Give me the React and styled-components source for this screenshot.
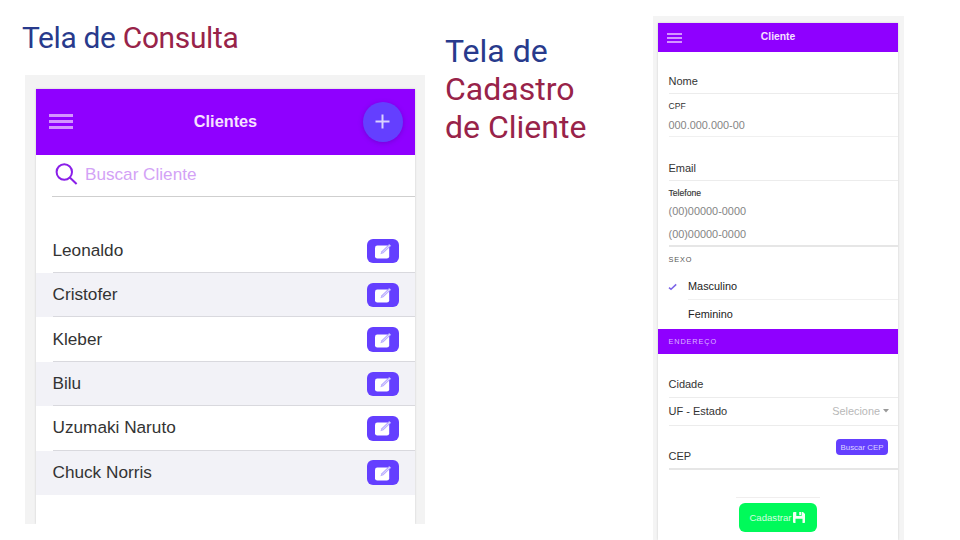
import React from "react";
import styled, { createGlobalStyle } from "styled-components";

const GlobalStyle = createGlobalStyle`
  *, *::before, *::after { box-sizing: border-box; }
  body {
    margin: 0;
    background: #fff;
    overflow: hidden;
    font-family: "Liberation Sans", Arial, sans-serif;
  }
`;

const purple = "#8f00ff";
const indigo = "#643fff";

const Slide = styled.main`
  display: grid;
  grid-template-columns: 445px 208px 251px;
  width: 960px;
  height: 540px;
  overflow: hidden;
`;

const Consulta = styled.section`
  padding: 19px 0 0 22px;
`;

const Heading = styled.h1`
  margin: 0;
  font-family: Roboto, sans-serif;
  font-weight: 400;
  font-size: ${(p) => p.$size}px;
  line-height: 38px;
  letter-spacing: ${(p) => p.$spacing || 0}px;
  white-space: nowrap;
  color: #283a8c;
  padding-top: ${(p) => p.$top || 0}px;
`;

const Accent = styled.span`
  color: #982349;
`;

const ListFrame = styled.div`
  width: 400px;
  height: 449px;
  margin: 18px 0 0 3px;
  padding: 14px 10px 0 11px;
  background: #f3f3f3;
`;

const FormFrame = styled.section`
  height: 524px;
  margin-top: 16px;
  padding: 7px 6px 0 5px;
  background: #f4f4f4;
`;

const Screen = styled.div`
  display: flex;
  flex-direction: column;
  height: 100%;
  background: #fff;
  box-shadow: 0 0 2px rgba(0, 0, 0, 0.16);
  clip-path: inset(-2px -2px 0 -2px);
`;

const AppBar = styled.header`
  display: grid;
  grid-template-columns: ${(p) => (p.$small ? "40px 1fr 40px" : "64px 1fr 64px")};
  align-items: center;
  flex: none;
  height: ${(p) => (p.$small ? 29 : 65.5)}px;
  background: ${purple};
`;

const BarTitle = styled.h2`
  margin: 0;
  text-align: center;
  font-size: ${(p) => p.$size}px;
  line-height: 1.2;
  font-weight: 700;
  color: #f6e0ff;
`;

const MenuButton = styled.button`
  display: flex;
  border: 0;
  padding: 0;
  background: none;
  margin-left: ${(p) => p.$inset}px;
`;

const AddButton = styled.button`
  display: flex;
  align-items: center;
  justify-content: center;
  width: 40px;
  height: 40px;
  margin-left: 11.5px;
  border: 0;
  border-radius: 50%;
  padding: 0;
  background: ${indigo};
  box-shadow: 0 1px 5px rgba(60, 0, 140, 0.35);
`;

const SearchBar = styled.label`
  display: flex;
  align-items: center;
  gap: 7px;
  flex: none;
  height: 42.5px;
  margin-left: 16px;
  padding: 0 0 2px 3px;
  border-bottom: 1px solid #cfcfcf;
  font-size: 17.15px;
  color: #d3a2f6;
`;

const ClientList = styled.ul`
  list-style: none;
  margin: 31.6px 0 0;
  padding: 0;
`;

const ClientItem = styled.li`
  height: 44.4px;
  padding-left: 16.5px;
  background: ${(p) => (p.$striped ? "#f2f2f7" : "#fff")};
`;

const ClientRow = styled.div`
  display: flex;
  align-items: center;
  justify-content: space-between;
  height: 100%;
  padding-right: 16px;
  border-bottom: 1px solid ${(p) => (p.$last ? "transparent" : "#d9d9de")};
  font-size: 17.2px;
  color: #333;
`;

const EditButton = styled.button`
  display: flex;
  align-items: center;
  justify-content: center;
  width: 32px;
  height: 24.5px;
  border: 0;
  border-radius: 6px;
  padding: 0;
  margin-top: 1px;
  background: ${indigo};
`;

const Field = styled.div`
  display: flex;
  align-items: flex-end;
  justify-content: space-between;
  flex: none;
  height: ${(p) => p.$height}px;
  margin-left: 10.5px;
  padding: 0 9px ${(p) => p.$bottom || 6}px 0;
  border-bottom: ${(p) => (p.$strong ? 2 : 1)}px solid ${(p) => (p.$strong ? "#e6e6e6" : "#ececec")};
`;

const FieldStack = styled.div`
  display: flex;
  flex-direction: column;
  flex: none;
  height: ${(p) => p.$height}px;
  margin-left: 10.5px;
  padding-top: 6px;
  border-bottom: ${(p) => (p.$strong ? 2 : 1)}px solid ${(p) => (p.$strong ? "#e6e6e6" : "#f0f0f0")};
`;

const Label = styled.span`
  font-size: 11px;
  line-height: 12px;
  color: #333;
`;

const SmallLabel = styled.span`
  font-size: 8.6px;
  line-height: 12px;
  color: #333;
  -webkit-text-stroke: ${(p) => (p.$heavy ? 0.15 : 0)}px #333;
`;

const Placeholder = styled.span`
  font-size: 10.9px;
  line-height: 13px;
  margin-top: ${(p) => p.$gap}px;
  color: #858585;
`;

const SectionLabel = styled.div`
  display: flex;
  align-items: center;
  flex: none;
  height: 25px;
  padding-left: 10.5px;
  font-size: 7.3px;
  letter-spacing: 0.9px;
  color: ${(p) => (p.$filled ? "#dcb5ff" : "#555")};
  background: ${(p) => (p.$filled ? purple : "transparent")};
`;

const Option = styled.div`
  display: grid;
  grid-template-columns: 20px 1fr;
  align-items: center;
  flex: none;
  height: 28px;
  margin-left: 10px;
`;

const OptionText = styled.span`
  display: flex;
  align-items: center;
  height: 28px;
  border-bottom: 1px solid ${(p) => (p.$last ? "transparent" : "#f0f0f0")};
  font-size: 10.9px;
  color: #222;
`;

const Select = styled.span`
  display: flex;
  align-items: center;
  gap: 3px;
  font-size: 10.9px;
  line-height: 12px;
  color: #b8b8b8;
`;

const CepButton = styled.button`
  width: 52px;
  height: 16px;
  margin: 0 1px 7px 0;
  border: 0;
  border-radius: 4px;
  padding: 0;
  background: ${indigo};
  color: #dcd4ff;
  font: 7.9px "Liberation Sans", Arial, sans-serif;
`;

const Actions = styled.footer`
  display: flex;
  align-items: center;
  justify-content: center;
  align-self: center;
  width: 84px;
  height: 40px;
  margin-top: 27px;
  border-top: 1px solid #f0eeee;
`;

const SaveButton = styled.button`
  display: flex;
  align-items: center;
  justify-content: center;
  gap: 1px;
  width: 78px;
  height: 29px;
  border: 0;
  border-radius: 6px;
  padding: 0 2px 0 0;
  background: #00fa5a;
  color: #d4ffe0;
  font: 9.6px "Liberation Sans", Arial, sans-serif;
`;

const MenuIcon = ({ width, height, stroke }) => (
  <svg width={width} height={height} viewBox={`0 0 ${width} ${height}`}>
    <path
      d={`M0 ${stroke / 2}H${width}M0 ${height / 2}H${width}M0 ${height - stroke / 2}H${width}`}
      stroke="#d494ff"
      strokeWidth={stroke}
    />
  </svg>
);

const PlusIcon = () => (
  <svg width="15" height="15" viewBox="0 0 15 15">
    <path d="M7.5 0.5V14.5M0.5 7.5H14.5" stroke="#d8d2ff" strokeWidth="2" />
  </svg>
);

const SearchIcon = () => (
  <svg width="23" height="22" viewBox="0 0 23 22" fill="none" stroke="#8a1fe8" strokeWidth="2">
    <circle cx="9.3" cy="9" r="7.7" />
    <path d="M14.8 14.5L21.6 21" />
  </svg>
);

const EditIcon = () => (
  <svg width="18" height="16" viewBox="0 0 18 16">
    <rect x="1" y="2.6" width="14.2" height="13" rx="2.3" fill="#fff" />
    <path d="M6.4 11.2L7.5 8.2L15.2 1L17.2 2.8L9.4 10.2Z" fill="#b9adff" />
    <path d="M8.4 9.3L16 2.2" stroke="#e2dcff" strokeWidth="0.9" />
  </svg>
);

const CheckIcon = () => (
  <svg width="9" height="9" viewBox="0 0 9 9">
    <path d="M1 5.6L3 7.3L8.2 2.4" fill="none" stroke="#7d66e8" strokeWidth="1.6" />
  </svg>
);

const CaretIcon = () => (
  <svg width="6" height="4" viewBox="0 0 6 4">
    <path d="M0 0H6L3 3.6Z" fill="#999" />
  </svg>
);

const SaveIcon = () => (
  <svg width="12" height="11" viewBox="0 0 12 11">
    <path fillRule="evenodd" d="M1 0H3.3V4H8.6V0H10L12 2V10.2Q12 11 11.2 11H9.5V6.8H2.5V11H1Q0 11 0 10V1Q0 0 1 0ZM6.2 0H8V3.2H6.2Z" fill="#f2fff5" />
  </svg>
);

const clients = ["Leonaldo", "Cristofer", "Kleber", "Bilu", "Uzumaki Naruto", "Chuck Norris"];

export default function App() {
  return (
    <>
      <GlobalStyle />
      <Slide>
        <Consulta>
          <Heading $size={29.9} $spacing={-0.32}>
            Tela de <Accent>Consulta</Accent>
          </Heading>
          <ListFrame>
            <Screen>
              <AppBar>
                <MenuButton $inset={13} aria-label="Menu">
                  <MenuIcon width={24} height={15} stroke={3} />
                </MenuButton>
                <BarTitle $size={16.3}>Clientes</BarTitle>
                <AddButton aria-label="Adicionar">
                  <PlusIcon />
                </AddButton>
              </AppBar>
              <SearchBar>
                <SearchIcon />
                Buscar Cliente
              </SearchBar>
              <ClientList>
                {clients.map((name, i) => (
                  <ClientItem key={name} $striped={i % 2 === 1}>
                    <ClientRow $last={i === clients.length - 1}>
                      {name}
                      <EditButton aria-label="Editar">
                        <EditIcon />
                      </EditButton>
                    </ClientRow>
                  </ClientItem>
                ))}
              </ClientList>
            </Screen>
          </ListFrame>
        </Consulta>

        <Heading $size={32} $top={31.5}>
          Tela de
          <br />
          <Accent>
            Cadastro
            <br />
            de Cliente
          </Accent>
        </Heading>

        <FormFrame>
          <Screen>
            <AppBar $small>
              <MenuButton $inset={9} aria-label="Menu">
                <MenuIcon width={15} height={10} stroke={2} />
              </MenuButton>
              <BarTitle $size={10.3}>Cliente</BarTitle>
            </AppBar>
            <Field $height={42}>
              <Label>Nome</Label>
            </Field>
            <FieldStack $height={43}>
              <SmallLabel>CPF</SmallLabel>
              <Placeholder $gap={7}>000.000.000-00</Placeholder>
            </FieldStack>
            <Field $height={44}>
              <Label>Email</Label>
            </Field>
            <FieldStack $height={66} $strong>
              <SmallLabel $heavy>Telefone</SmallLabel>
              <Placeholder $gap={6}>(00)00000-0000</Placeholder>
              <Placeholder $gap={10}>(00)00000-0000</Placeholder>
            </FieldStack>
            <SectionLabel>SEXO</SectionLabel>
            <Option>
              <CheckIcon />
              <OptionText>Masculino</OptionText>
            </Option>
            <Option>
              <span />
              <OptionText $last>Feminino</OptionText>
            </Option>
            <Spacer />
            <SectionLabel $filled>ENDEREÇO</SectionLabel>
            <Field $height={44} $bottom={7}>
              <Label>Cidade</Label>
            </Field>
            <Field $height={28} $bottom={8}>
              <Label>UF - Estado</Label>
              <Select>
                Selecione
                <CaretIcon />
              </Select>
            </Field>
            <Field $height={44} $strong>
              <Label>CEP</Label>
              <CepButton>Buscar CEP</CepButton>
            </Field>
            <Actions>
              <SaveButton>
                Cadastrar
                <SaveIcon />
              </SaveButton>
            </Actions>
          </Screen>
        </FormFrame>
      </Slide>
    </>
  );
}

const Spacer = styled.div`
  flex: none;
  height: 1px;
`;
